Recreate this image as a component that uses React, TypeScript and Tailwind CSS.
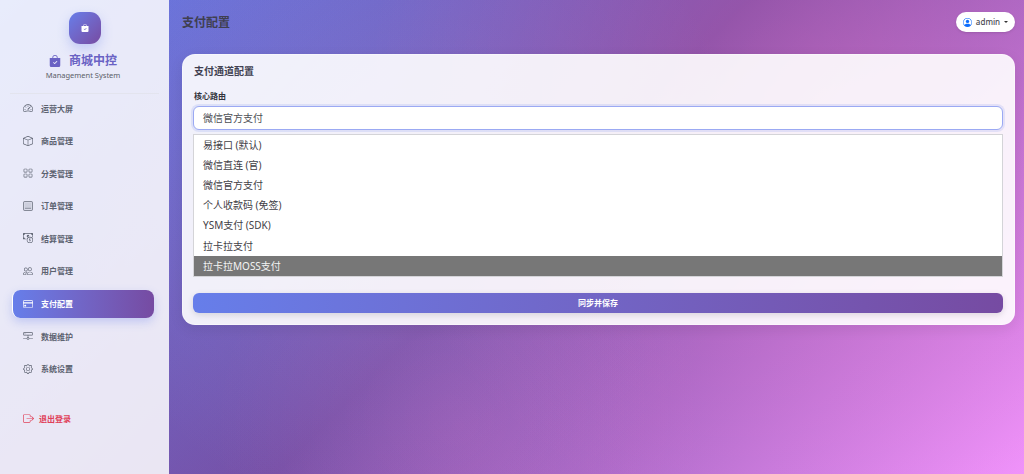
import React from "react";
import {
  BsSpeedometer2,
  BsBox,
  BsGrid,
  BsCashCoin,
  BsPeople,
  BsCreditCard,
  BsHddNetwork,
  BsGear,
  BsBoxArrowRight,
  BsBagCheckFill,
  BsPersonCircle,
} from "react-icons/bs";

const font = "font-['Noto_Sans','Noto_Sans_CJK_SC',sans-serif]";

// order icon: framed box with a line near the bottom
const OrderIcon = ({ size }: { size: number }) => (
  <svg width={size} height={size} viewBox="0 0 16 16" fill="none" stroke="currentColor" strokeWidth="1.3">
    <rect x="1" y="1" width="14" height="14" rx="1" />
    <rect x="3" y="3" width="10" height="7" fill="currentColor" fillOpacity="0.2" stroke="none" />
    <path d="M3 11.5h10" />
  </svg>
);

const navItems = [
  { label: "运营大屏", icon: BsSpeedometer2 },
  { label: "商品管理", icon: BsBox },
  { label: "分类管理", icon: BsGrid },
  { label: "订单管理", icon: OrderIcon },
  { label: "结算管理", icon: BsCashCoin },
  { label: "用户管理", icon: BsPeople },
  { label: "支付配置", icon: BsCreditCard, active: true },
  { label: "数据维护", icon: BsHddNetwork },
  { label: "系统设置", icon: BsGear },
];

const options = [
  "易接口 (默认)",
  "微信直连 (官)",
  "微信官方支付",
  "个人收款码 (免签)",
  "YSM支付 (SDK)",
  "拉卡拉支付",
];

const Sidebar = () => {
  return (
    <aside className="w-[169px] h-full shrink-0 bg-white/85 flex flex-col items-stretch">
      {/* Brand */}
      <div className="mx-[10px] pt-[12px] pb-[12px] flex flex-col items-center border-b border-[#e3e4ee]">
        <div className="w-[32px] h-[32px] rounded-[11px] bg-gradient-to-br from-[#667eea] to-[#764ba2] shadow-[0_5px_12px_rgba(102,126,234,0.3)] flex items-center justify-center text-white">
          <BsBagCheckFill size={8} />
        </div>
        <div className="mt-[9px] h-[16px] -ml-[3px] flex items-center gap-[8px] text-[#6a62c4] text-[12px] leading-[16px] font-semibold">
          <BsBagCheckFill size={12} />
          <span>商城中控</span>
        </div>
        <div className="mt-[1px] -ml-[3px] text-[7.5px] leading-[11px] text-[#5b5f68]">Management System</div>
      </div>

      {/* Nav */}
      <nav className="pl-[12px] pr-[15px] flex flex-col gap-[4.6px]">
        {navItems.map((item) => {
          const Icon = item.icon;
          return (
            <div
              key={item.label}
              className={
                item.active
                  ? "h-[28px] rounded-[8px] pl-[10px] flex items-center gap-[8px] bg-gradient-to-r from-[#667eea] to-[#764ba2] text-white border-l border-white shadow-[0_4px_10px_rgba(102,126,234,0.3)]"
                  : "h-[28px] rounded-[8px] pl-[11px] flex items-center gap-[8px] text-[#5c6270]"
              }
            >
              <Icon size={10} />
              <span className="text-[8px] leading-[11px] font-semibold">{item.label}</span>
            </div>
          );
        })}
      </nav>

      {/* Logout */}
      <div className="mt-[30px] pl-[23px] flex items-center gap-[5px] text-[#e04058]">
        <BsBoxArrowRight size={11} />
        <span className="text-[8px] leading-[11px] font-semibold">退出登录</span>
      </div>
    </aside>
  );
};

const App = () => {
  return (
    <div
      className={`${font} w-full h-screen overflow-hidden flex bg-[radial-gradient(circle_at_45%_90%,rgba(255,119,198,0.12),transparent_35%),radial-gradient(circle_at_20%_80%,rgba(120,119,198,0.15),transparent_50%),radial-gradient(circle_at_80%_20%,rgba(255,119,198,0.3),transparent_50%),radial-gradient(circle_at_40%_40%,rgba(170,180,255,0.2),transparent_50%),linear-gradient(135deg,#667eea_0%,#764ba2_50%,#f093fb_100%)]`}
    >
      <Sidebar />

      <main className="flex-1 pl-[13px] pr-[9px] pt-[12px]">
        {/* Top bar */}
        <header className="h-[20px] flex items-center justify-between">
          <h1 className="mt-[1px] text-[12px] font-semibold text-[#3f3f50]">支付配置</h1>
          <div className="h-[20px] w-[59px] rounded-full bg-white flex items-center justify-center gap-[4px] shadow-sm text-[#4a4a52]">
            <BsPersonCircle size={9} className="text-[#0d6efd]" />
            <span className="text-[8px] font-medium">admin</span>
            <span className="w-0 h-0 border-x-[2px] border-x-transparent border-t-[2px] border-t-[#333]" />
          </div>
        </header>

        {/* Card */}
        <section className="mt-[22px] h-[271px] rounded-[13px] bg-white/90 pl-[10px] pr-[11px] pt-[10px] shadow-[0_4px_14px_rgba(0,0,0,0.08)] border border-white/40">
          <h2 className="pl-[1px] text-[10px] leading-[13px] font-semibold text-[#3f3f50]">支付通道配置</h2>

          <label className="block pl-[1px] mt-[12px] text-[8px] leading-[11px] font-semibold text-[#33343c]">核心路由</label>

          <div className="mt-[5px] h-[24px] rounded-[6px] bg-white border border-[#9ba9f3] shadow-[0_0_0_2px_rgba(102,126,234,0.15)] pl-[9px] flex items-center text-[10px] text-[#4d4f55]">
            微信官方支付
          </div>

          {/* Open dropdown list */}
          <div className="mt-[4px] border border-[#d4d4d8] bg-white text-[10px] text-[#3f4046]">
            {options.map((option) => (
              <div key={option} className="h-[20.2px] pl-[9px] flex items-center">
                {option}
              </div>
            ))}
            <div className="h-[20.2px] pl-[9px] flex items-center bg-[#777777] text-[#f4f4f4]">拉卡拉MOSS支付</div>
          </div>

          <button className="mt-[16px] w-full h-[20px] rounded-[6px] bg-gradient-to-r from-[#667eea] to-[#764ba2] text-white text-[8px] font-semibold flex items-center justify-center shadow-[0_2px_6px_rgba(0,0,0,0.12)]">
            同步并保存
          </button>
        </section>
      </main>
    </div>
  );
};

export default App;
